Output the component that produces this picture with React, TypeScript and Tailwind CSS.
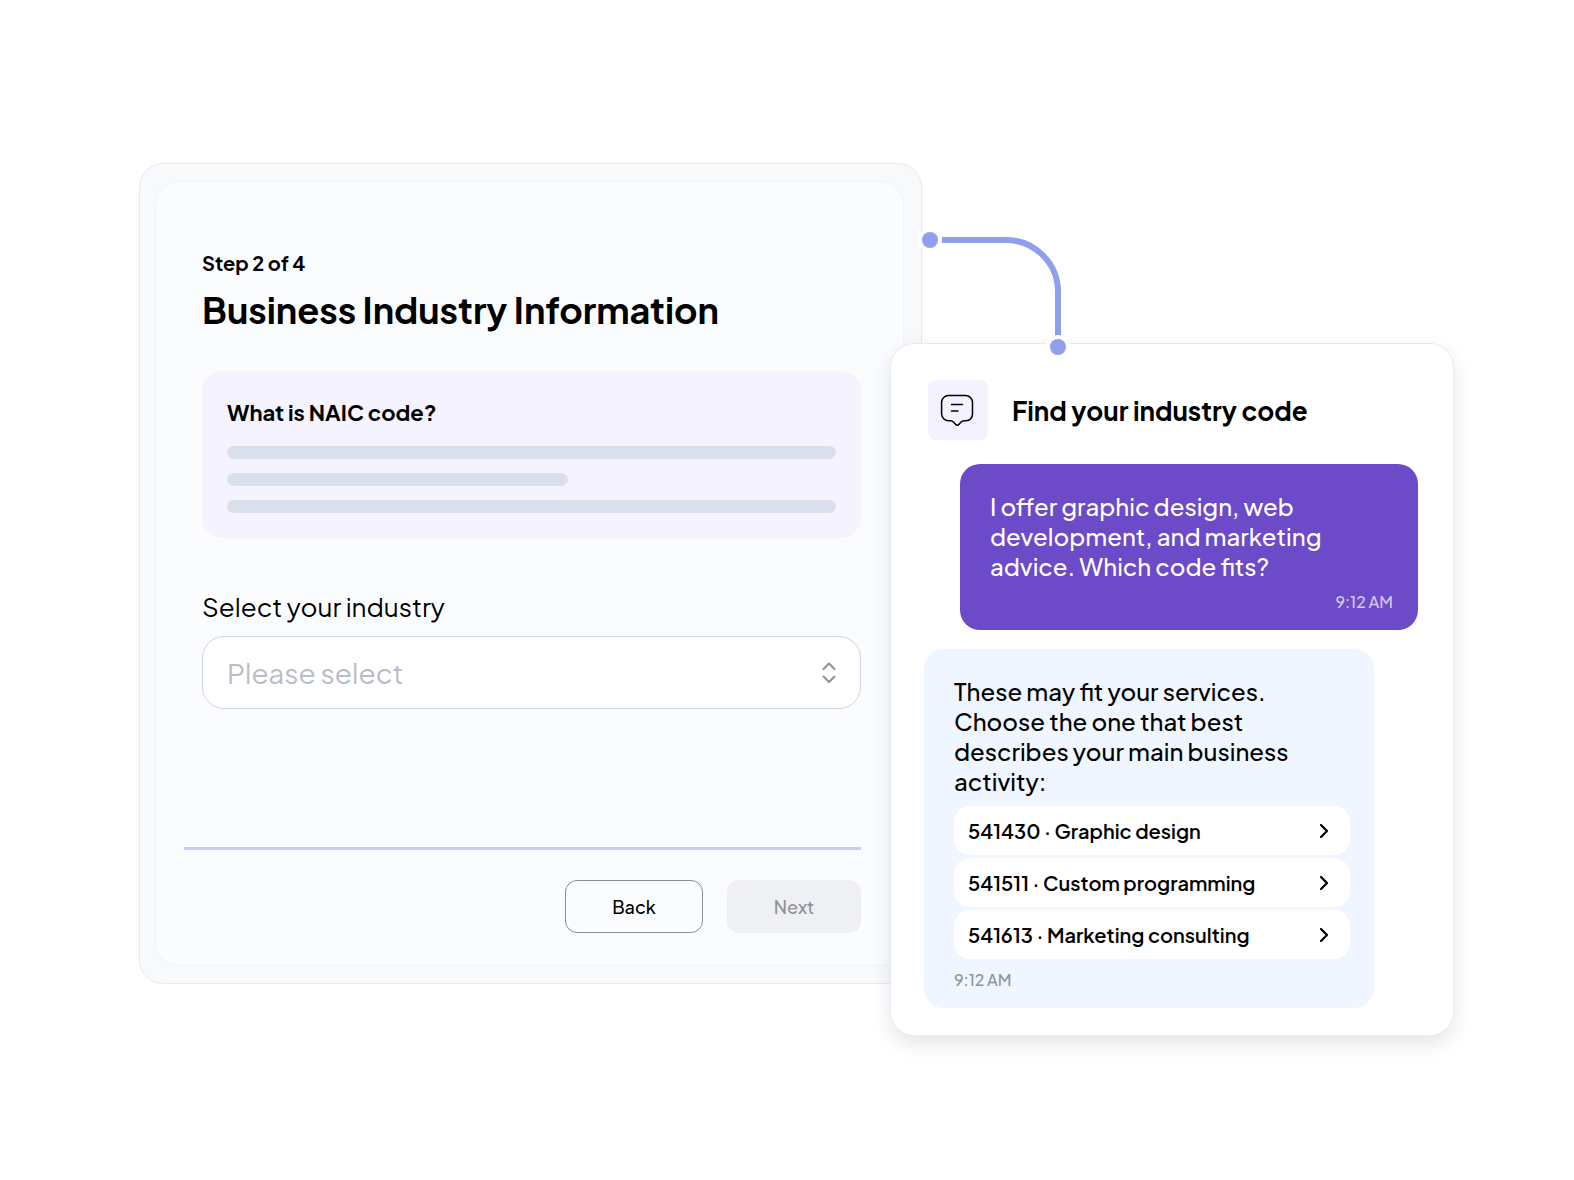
import { useState } from 'react'
import { ChevronRight } from 'lucide-react'

const CODES = [
  { code: '541430', label: 'Graphic design' },
  { code: '541511', label: 'Custom programming' },
  { code: '541613', label: 'Marketing consulting' }
]

function ChatIcon() {
  return (
    <svg
      className="w-[60px] h-[60px]"
      viewBox="0 0 60 60"
      fill="none"
      stroke="#000"
      strokeWidth="1.5"
      strokeLinecap="round"
      strokeLinejoin="round"
      aria-hidden="true"
    >
      <path d="M20.500 15.500h17c3.900 0 7 3.100 7 7v11.300c0 3.900-2.600 6.900-6.500 6.900h-2c-1.300 0-2 .4-2.900 1.300l-2 2.200c-1.100 1.300-2.500 1.300-3.600 0l-2-2.200c-.9-.9-1.600-1.300-2.900-1.300h-2c-3.900 0-7-3-7-6.900V22.500c0-3.900 3.100-7 6.900-7z" />
      <path d="M23.500 24.500h11M23.500 31h6.500" />
    </svg>
  )
}

// Line with a dot on each end, joining the form to the chat card
function Connector() {
  return (
    <svg
      className="absolute -top-[117px] left-[25px] w-[156px] h-[136px] pointer-events-none"
      viewBox="0 0 156 136"
      fill="none"
      aria-hidden="true"
    >
      <path d="M14 13h76a52 52 0 0 1 52 52v55" stroke="#909eee" strokeWidth="6" />
      <circle cx="14" cy="13" r="12" fill="#fff" />
      <circle cx="14" cy="13" r="8" fill="#909eee" />
      <circle cx="142" cy="120" r="12" fill="#fff" />
      <circle cx="142" cy="120" r="8" fill="#909eee" />
    </svg>
  )
}

function IndustryForm() {
  const [industry, setIndustry] = useState('')

  return (
    <section className="flex-1 min-w-0 rounded-[24px] border border-[#e6e9f6] bg-[#f8f9fb] pl-[15px] pr-[17px] py-[17px]">
      <div className="rounded-[24px] border border-[#f0f4fd] bg-[#fbfcfe] pt-[67px] pb-8 pl-7 pr-[42px]">
        <div className="pl-[18px]">
          <p className="text-[20px] leading-7 font-bold">Step 2 of 4</p>
          <h1 className="mt-[9px] text-[36px] leading-[48px] font-bold">Business Industry Information</h1>

          <div className="mt-[37px] rounded-[20px] bg-[#f4f3fe] px-[25px] pt-[26px] pb-[25px]">
            <h2 className="text-[22px] leading-[30px] font-bold">What is NAIC code?</h2>
            <div className="mt-[19px] flex flex-col gap-[14px]">
              <div className="h-[13px] rounded-full bg-[#d9dfec]" />
              <div className="h-[13px] w-[56%] rounded-full bg-[#d9dfec]" />
              <div className="h-[13px] rounded-full bg-[#d9dfec]" />
            </div>
          </div>

          <label htmlFor="industry" className="mt-[51px] block text-[26px] leading-9">
            Select your industry
          </label>
          <div className="relative mt-[11px]">
            <select
              id="industry"
              value={industry}
              onChange={(e) => setIndustry(e.target.value)}
              className="block w-full h-[73px] appearance-none rounded-[22px] border border-[#d0d4e2] bg-white pl-6 pr-16 text-[28px] text-[#b8bcc8]"
            >
              <option value="">Please select</option>
              {CODES.map((c) => (
                <option key={c.code} value={c.code}>{c.label}</option>
              ))}
            </select>
            <svg
              className="absolute right-[24px] top-[26px] w-4 h-[22px] pointer-events-none"
              viewBox="0 0 16 22"
              fill="none"
              stroke="#8b8f97"
              strokeWidth="2"
              strokeLinecap="round"
              strokeLinejoin="round"
              aria-hidden="true"
            >
              <path d="M2.500 7 8 1.500 13.500 7M2.500 14.500 8 20 13.500 14.500" />
            </svg>
          </div>
        </div>

        <hr className="mt-[138px] border-0 h-[3px] bg-[#c8cdf4]" />

        <div className="mt-[30px] flex justify-end gap-6">
          <button className="w-[138px] h-[53px] rounded-[12px] border border-[#8b8d94] text-[18px] font-medium">Back</button>
          <button disabled className="w-[134px] h-[53px] rounded-[12px] bg-[#eff0f3] text-[18px] font-medium text-[#8e9299]">Next</button>
        </div>
      </div>
    </section>
  )
}

function CodeChat() {
  return (
    <section className="relative mt-[180px] -ml-8 w-[564px] shrink-0 rounded-[24px] border border-[#e6e9f8] bg-white pt-9 pb-[27px] pl-[33px] pr-[35px] shadow-[0_8px_20px_rgba(0,0,0,0.1)]">
      <Connector />

      <header className="ml-1 flex items-center gap-6">
        <div className="rounded-lg bg-[#f3f2fe]">
          <ChatIcon />
        </div>
        <h2 className="pt-[2px] text-[26px] leading-9 font-bold">Find your industry code</h2>
      </header>

      <div className="mt-6 ml-9 rounded-[20px] bg-[#6d4ac7] pl-[30px] pr-[25px] pt-[27px] pb-4 text-white">
        <p className="max-w-[360px] text-[24px] leading-[30px] font-medium">
          I offer graphic design, web development, and marketing advice. Which code fits?
        </p>
        <time className="mt-[9px] block text-right text-[16px] leading-6 font-medium text-[#d3c9ee]">9:12 AM</time>
      </div>

      <div className="mt-[19px] mr-11 rounded-[20px] bg-[#eff6ff] pl-[30px] pr-6 pt-[27px] pb-4">
        <p className="max-w-[360px] text-[24px] leading-[30px] font-medium">
          These may fit your services. Choose the one that best describes your main business activity:
        </p>
        <div className="mt-[10px] flex flex-col gap-[3px]">
          {CODES.map((c) => (
            <button
              key={c.code}
              className="flex h-[49px] items-center justify-between rounded-[16px] bg-white pl-[14px] pr-[14px] text-[20px] font-semibold"
            >
              <span>{c.code} · {c.label}</span>
              <ChevronRight className="w-6 h-6" strokeWidth={2.25} />
            </button>
          ))}
        </div>
        <time className="mt-[9px] block text-[16px] leading-6 font-medium text-[#8f939b]">9:12 AM</time>
      </div>
    </section>
  )
}

export default function App() {
  return (
    <main className="flex min-h-screen items-start bg-white pt-[163px] pb-[120px] pl-[139px] pr-[120px] font-['Plus_Jakarta_Sans','Inter',sans-serif] text-black">
      <IndustryForm />
      <CodeChat />
    </main>
  )
}
